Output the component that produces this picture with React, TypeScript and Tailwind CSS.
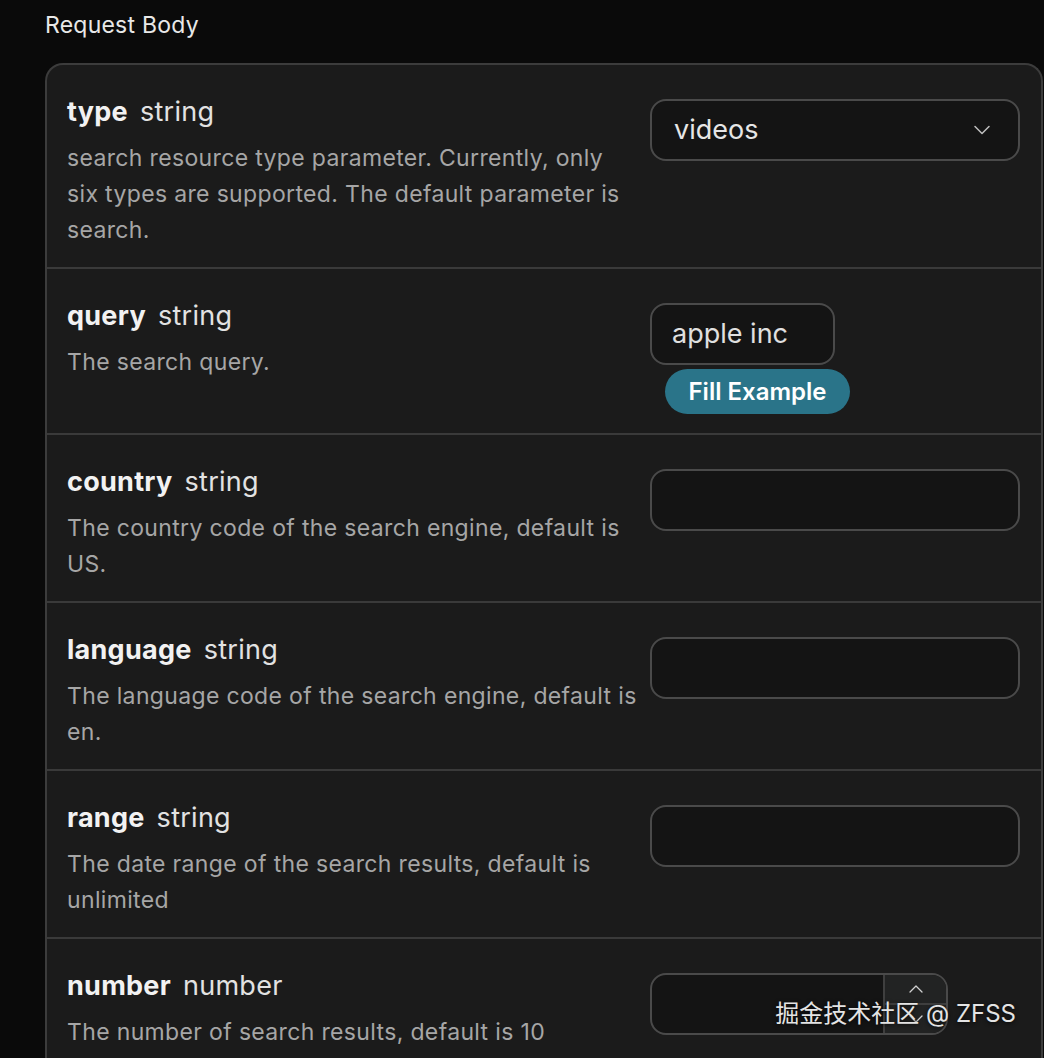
import { ChevronDown, ChevronUp } from 'lucide-react'

type Field = {
  name: string
  type: string
  desc: string
  value?: string
  kind: 'select' | 'text' | 'number'
  width?: string
  example?: boolean
}

const fields: Field[] = [
  {
    name: 'type',
    type: 'string',
    desc: 'search resource type parameter. Currently, only six types are supported. The default parameter is search.',
    value: 'videos',
    kind: 'select',
  },
  { name: 'query', type: 'string', desc: 'The search query.', value: 'apple inc', kind: 'text', width: 'w-[185px]', example: true },
  { name: 'country', type: 'string', desc: 'The country code of the search engine, default is US.', kind: 'text' },
  { name: 'language', type: 'string', desc: 'The language code of the search engine, default is en.', kind: 'text' },
  { name: 'range', type: 'string', desc: 'The date range of the search results, default is unlimited', kind: 'text' },
  { name: 'number', type: 'number', desc: 'The number of search results, default is 10', kind: 'number' },
]

function FieldInput({ field }: { field: Field }) {
  if (field.kind === 'select') {
    return (
      <div className="flex h-[62px] w-full items-center justify-between rounded-[16px] border-2 border-[#4a4a4a] bg-[#141414] pl-[22px] pr-[22px]">
        <span className="text-[27px] text-[#e6e6e6]">{field.value}</span>
        <ChevronDown className="h-7 w-7 text-[#bdbdbd]" strokeWidth={1.3} />
      </div>
    )
  }
  if (field.kind === 'number') {
    return (
      <div className="flex h-[62px] w-[298px] overflow-hidden rounded-[16px] border-2 border-[#4a4a4a] bg-[#141414]">
        <div className="flex-1" />
        <div className="flex w-[63px] flex-col border-l-2 border-[#3f3f3f] bg-[#222323]">
          <div className="flex flex-1 items-center justify-center border-b-2 border-[#3f3f3f]">
            <ChevronUp className="h-6 w-6 text-[#d0d0d0]" strokeWidth={1.3} />
          </div>
          <div className="flex flex-1 items-center justify-center">
            <ChevronDown className="h-6 w-6 text-[#d0d0d0]" strokeWidth={1.3} />
          </div>
        </div>
      </div>
    )
  }
  return (
    <div className="flex flex-col items-start">
      <div
        className={`flex h-[62px] items-center rounded-[16px] border-2 border-[#4a4a4a] bg-[#141414] px-[20px] ${field.width ?? 'w-full'}`}
      >
        <span className="text-[27px] text-[#e0e0e0]">{field.value}</span>
      </div>
      {field.example && (
        <button className="ml-[15px] mt-[4px] h-[45px] w-[185px] rounded-full bg-[#2a7489] text-[24px] font-semibold text-white">
          Fill Example
        </button>
      )}
    </div>
  )
}

export default function App() {
  return (
    <div
      className="relative h-[1058px] overflow-hidden bg-[#0a0a0a] pl-[45px] pr-[1px]"
      style={{ fontFamily: 'Inter, "Noto Sans CJK SC", sans-serif' }}
    >
      <h2 className="pt-[9px] text-[23px] leading-[32px] tracking-[0.01em] text-[#e8e8e8]">Request Body</h2>

      <div className="mt-[22px] min-h-[1100px] rounded-t-[18px] border-2 border-b-0 border-[#3c3c3c] bg-[#1b1b1b]">
        {fields.map(field => (
          <div
            key={field.name}
            className="flex gap-[12px] border-b-2 border-[#3a3a3a] pb-[19px] pl-[20px] pr-[21px] pt-[28px] last:border-b-0"
          >
            <div className="flex-1">
              <div className="flex items-baseline gap-[12px] leading-[37px]">
                <span className="text-[27px] font-bold tracking-[0.01em] text-[#f2f2f2]">{field.name}</span>
                <span className="text-[27px] tracking-[0.01em] text-[#e2e2e2]">{field.type}</span>
              </div>
              <p className="mt-[10px] text-[23px] leading-[36px] tracking-[0.015em] text-[#a6a6a6]">{field.desc}</p>
            </div>
            <div className="w-[370px] shrink-0 pt-[6px]">
              <FieldInput field={field} />
            </div>
          </div>
        ))}
      </div>

      <div className="absolute bottom-[26px] right-[28px] text-[24px] text-[#e4e4e4] [text-shadow:_0_1px_4px_rgba(0,0,0,0.8)]">
        掘金技术社区 @ ZFSS
      </div>
    </div>
  )
}
